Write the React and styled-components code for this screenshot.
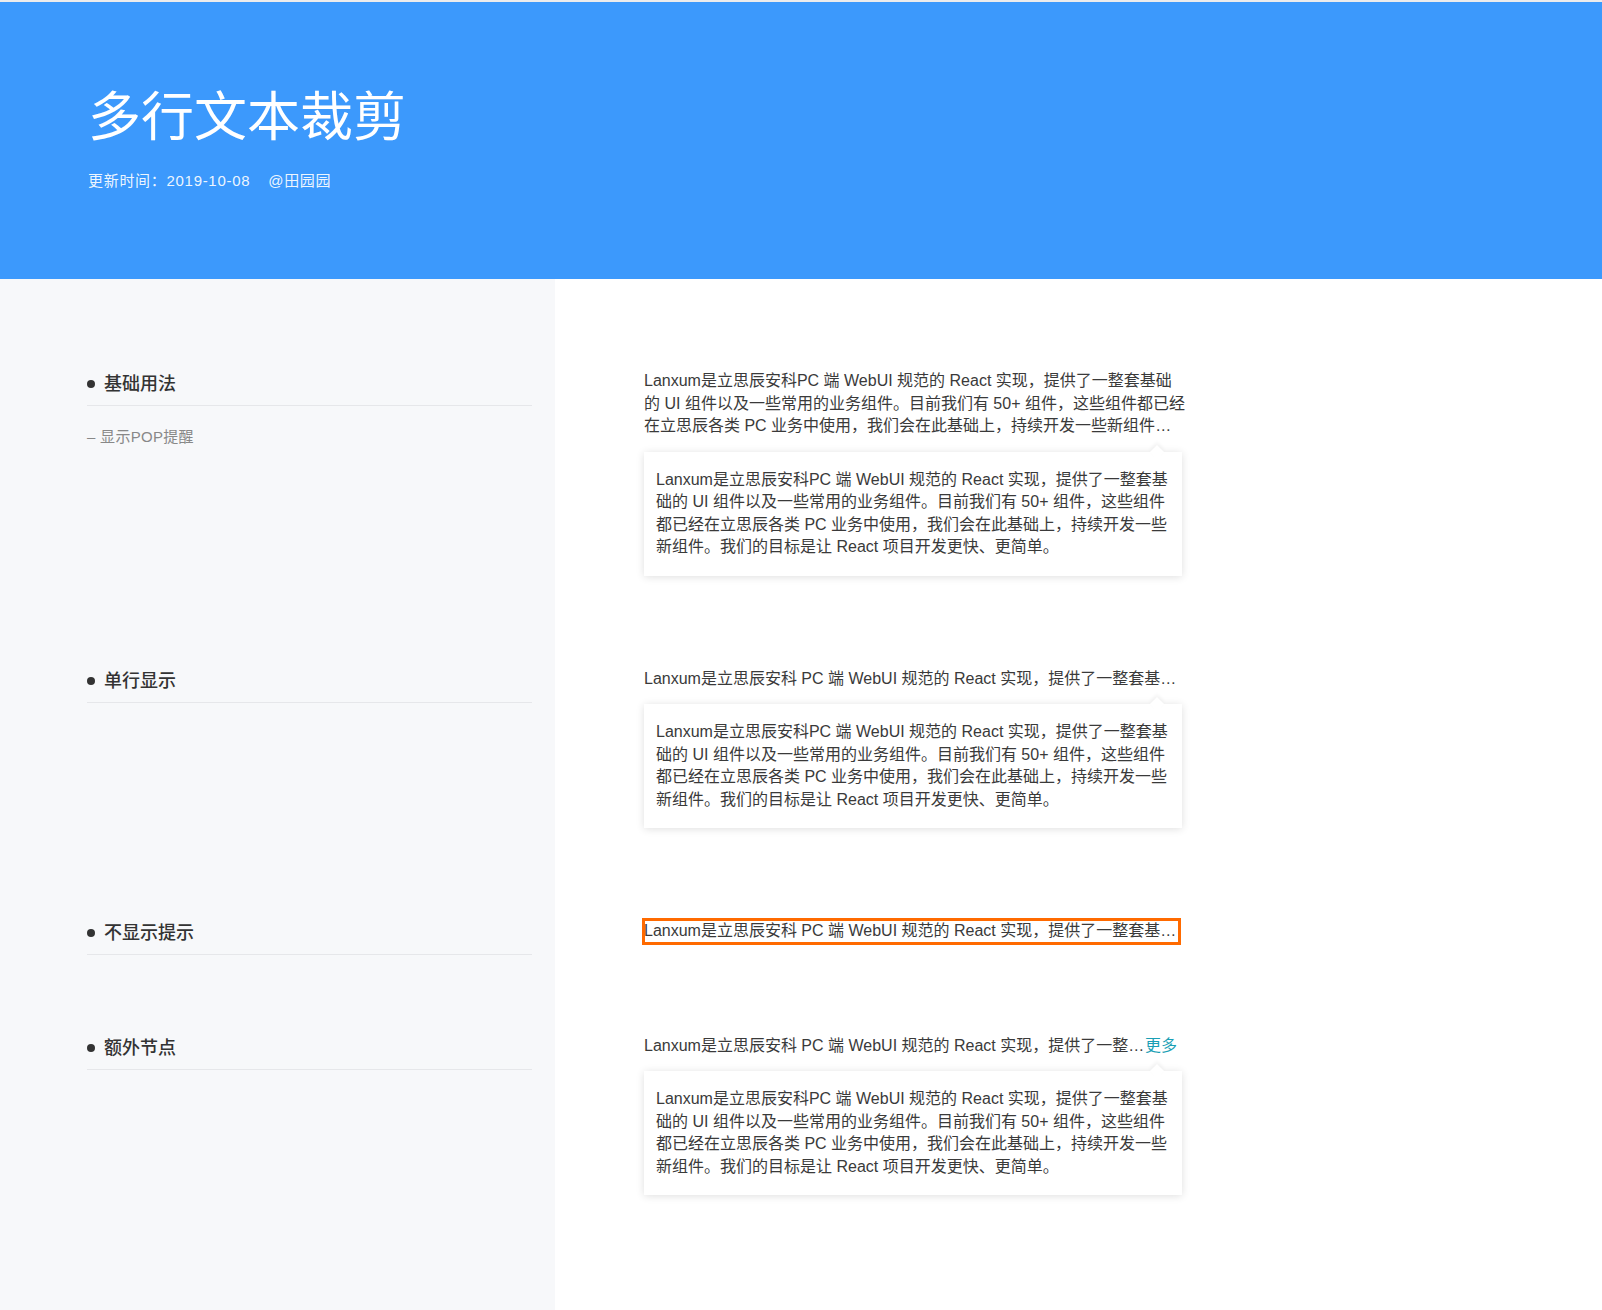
import React from "react";
import styled, { createGlobalStyle } from "styled-components";

const GlobalStyle = createGlobalStyle`
  body {
    margin: 0;
    background: #fff;
    color: #333;
    font-family: "Liberation Sans", "Noto Sans CJK SC", sans-serif;
  }
`;

const LONG_TEXT =
  "Lanxum是立思辰安科PC 端 WebUI 规范的 React 实现，提供了一整套基础的 UI 组件以及一些常用的业务组件。目前我们有 50+ 组件，这些组件都已经在立思辰各类 PC 业务中使用，我们会在此基础上，持续开发一些新组件。我们的目标是让 React 项目开发更快、更简单。";
const LINE_TEXT =
  "Lanxum是立思辰安科 PC 端 WebUI 规范的 React 实现，提供了一整套基础的 UI 组件以及一些常用的业务组件。";

const App = () => {
  return (
    <>
      <GlobalStyle />
      <Header>
        <Title>多行文本裁剪</Title>
        <Meta>
          <span>更新时间：2019-10-08</span>
          <span>@田园园</span>
        </Meta>
      </Header>

      <Main>
        <Row>
          <Side $first>
            <SectionTitle>
              <Dot />
              基础用法
            </SectionTitle>
            <SubItem>– 显示POP提醒</SubItem>
          </Side>
          <Content $first>
            <Clamp $lines={3}>{LONG_TEXT}</Clamp>
            <Pop>{LONG_TEXT}</Pop>
          </Content>
        </Row>

        <Row>
          <Side>
            <SectionTitle>
              <Dot />
              单行显示
            </SectionTitle>
          </Side>
          <Content>
            <SingleLine>{LINE_TEXT}</SingleLine>
            <Pop>{LONG_TEXT}</Pop>
          </Content>
        </Row>

        <Row>
          <Side>
            <SectionTitle>
              <Dot />
              不显示提示
            </SectionTitle>
          </Side>
          <Content>
            <SingleLine $highlight>{LINE_TEXT}</SingleLine>
          </Content>
        </Row>

        <Row>
          <Side>
            <SectionTitle>
              <Dot />
              额外节点
            </SectionTitle>
          </Side>
          <Content>
            <WithExtra>
              <SingleLine>{LINE_TEXT}</SingleLine>
              <More>更多</More>
            </WithExtra>
            <Pop>{LONG_TEXT}</Pop>
          </Content>
        </Row>

        <Row $fill>
          <Side />
          <div />
        </Row>
      </Main>
    </>
  );
};

export default App;

const Header = styled.header`
  box-sizing: border-box;
  height: 279px;
  padding: 85px 88px 0;
  background: #3c99fc;
  border-top: 2px solid #ececec;
  color: #fff;
`;

const Title = styled.h1`
  margin: 0;
  font-size: 53px;
  font-weight: 400;
  line-height: 62px;
`;

const Meta = styled.div`
  display: flex;
  gap: 18px;
  margin-top: 21px;
  font-size: 15px;
  line-height: 22px;
  letter-spacing: 0.7px;
  color: rgba(255, 255, 255, 0.92);
`;

const Main = styled.main`
  display: flex;
  flex-direction: column;
  min-height: calc(100vh - 279px);
`;

const Row = styled.section`
  display: grid;
  grid-template-columns: 555px 1fr;
  flex: ${(p) => (p.$fill ? 1 : "none")};
`;

const Side = styled.div`
  padding: ${(p) => (p.$first ? 93 : 1)}px 23px 0 87px;
  background: #f7f8fa;
`;

const SectionTitle = styled.h3`
  display: flex;
  align-items: center;
  gap: 9px;
  margin: 0;
  padding-bottom: 9px;
  border-bottom: 1px solid #e6e7ea;
  font-size: 18px;
  font-weight: 500;
  line-height: 24px;
  color: #333;
`;

const Dot = styled.i`
  width: 8px;
  height: 8px;
  border-radius: 50%;
  background: #333;
`;

const SubItem = styled.div`
  margin-top: 21px;
  font-size: 15px;
  line-height: 20px;
  letter-spacing: 0.3px;
  color: #888;
`;

const Content = styled.div`
  width: 535px;
  padding: ${(p) => (p.$first ? 91 : 0)}px 0 92px 89px;
  font-size: 16px;
  line-height: 22.5px;
  color: #3a3a3a;
`;

const Clamp = styled.div`
  display: -webkit-box;
  width: 542px;
  -webkit-box-orient: vertical;
  -webkit-line-clamp: ${(p) => p.$lines};
  overflow: hidden;
`;

const SingleLine = styled.div`
  overflow: hidden;
  white-space: nowrap;
  text-overflow: ellipsis;
  outline: ${(p) => (p.$highlight ? "3px solid #ff6a00" : "none")};
  outline-offset: -1px;
`;

const WithExtra = styled.div`
  display: flex;
  width: 533px;
  & > ${SingleLine} {
    flex: 0 1 auto;
    min-width: 0;
  }
`;

const More = styled.a`
  flex: none;
  color: #1a9fb5;
  cursor: pointer;
`;

const Pop = styled.div`
  position: relative;
  box-sizing: border-box;
  width: 538px;
  margin-top: 14px;
  padding: 17px 12px;
  background: #fff;
  box-shadow: 0 1px 8px rgba(0, 0, 0, 0.13);

  &::before {
    content: "";
    position: absolute;
    top: -5px;
    right: 20px;
    width: 10px;
    height: 10px;
    background: #fff;
    transform: rotate(45deg);
    box-shadow: -2px -2px 4px rgba(0, 0, 0, 0.05);
  }
`;
